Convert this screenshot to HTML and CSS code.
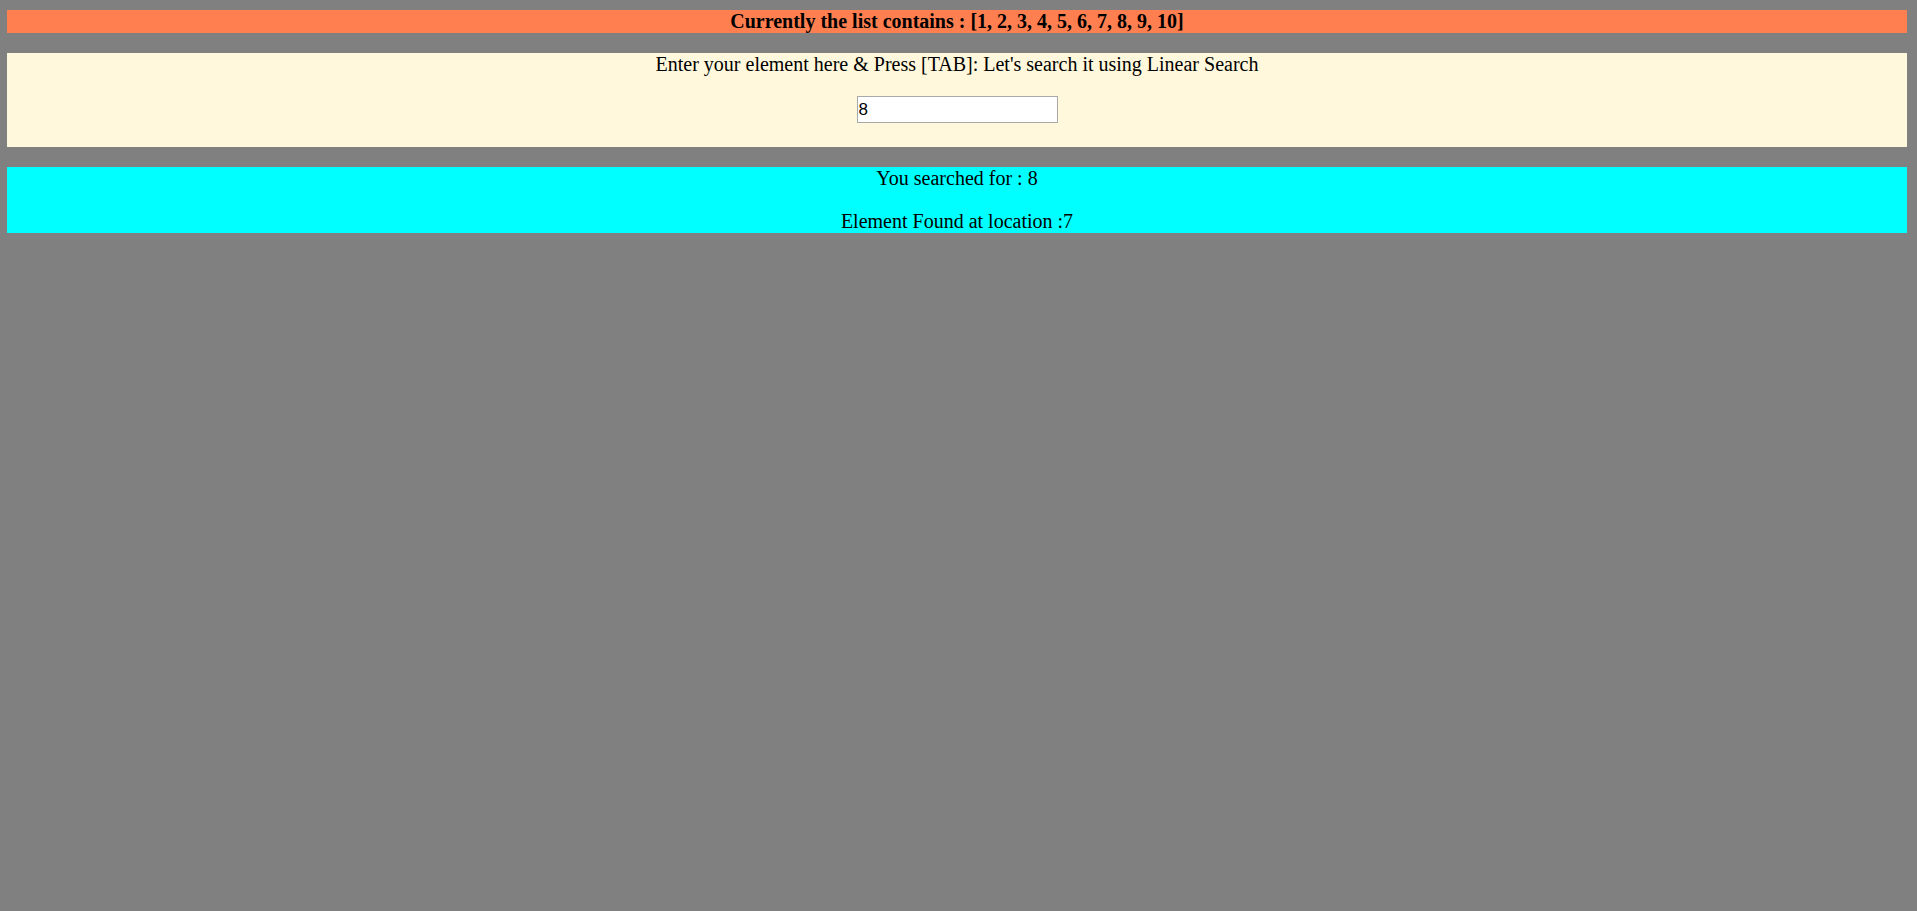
FILE: index.html
```html
<!DOCTYPE html>
<html>
<head>
<meta charset="utf-8">
<title>Linear Search</title>
<link rel="stylesheet" href="styles.css">
</head>
<body>
<div class="list-bar">Currently the list contains : [1, 2, 3, 4, 5, 6, 7, 8, 9, 10]</div>
<div class="search-box">
  <div class="prompt">Enter your element here &amp; Press [TAB]: Let's search it using Linear Search</div>
  <input class="search-input" type="text" value="8">
</div>
<div class="result-box">
  <div class="result-line">You searched for : 8</div>
  <div class="result-line">Element Found at location :7</div>
</div>
</body>
</html>
```

FILE: styles.css
```css
html, body {
  background: #808080;
}
body {
  margin: 10px 10px 0 7px;
  font-family: "Liberation Serif", "Times New Roman", serif;
  font-size: 20px;
  line-height: 23px;
  color: #000;
  display: flex;
  flex-direction: column;
  gap: 20px;
}
.list-bar {
  background: #ff7f50;
  font-weight: bold;
  text-align: center;
  height: 23px;
}
.search-box {
  background: #fff8dc;
  text-align: center;
  display: flex;
  flex-direction: column;
  align-items: center;
  padding-bottom: 24px;
}
.prompt {
  height: 23px;
}
.search-input {
  margin-top: 20px;
  width: 201px;
  height: 27px;
  box-sizing: border-box;
  border: 1px solid #a9a9a9;
  background: #fff;
  padding: 0 1px;
  font-family: "Liberation Sans", Arial, sans-serif;
  font-size: 17px;
  color: #000;
  outline: none;
}
.result-box {
  background: #00ffff;
  text-align: center;
  display: flex;
  flex-direction: column;
  gap: 20px;
}
```
